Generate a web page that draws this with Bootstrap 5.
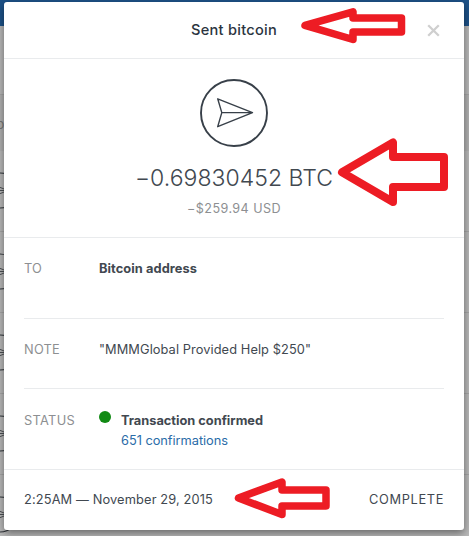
<!DOCTYPE html>
<html lang="en">
<head>
  <meta charset="UTF-8" />
  <meta name="viewport" content="width=device-width, initial-scale=1" />
  <title>Sent bitcoin</title>
  <link href="https://cdn.jsdelivr.net/npm/bootstrap@5.3.3/dist/css/bootstrap.min.css" rel="stylesheet">
  <style>
    body { height: 536px; background: #b9b9b9; font-family: Inter, "Liberation Sans", sans-serif; font-size: 12.8px; line-height: 18px; color: #414850; }
    .page-art, .arrows { top: 0; left: 0; width: 469px; height: 536px; }
    .arrows { pointer-events: none; z-index: 2; }
    .tx-dialog { width: 460px; height: 528px; margin: 2px 0 0 4px; border-radius: 3px; box-shadow: 0 3px 8px rgba(0, 0, 0, .45); }
    .tx-head { height: 57px; border-bottom: 1px solid #e9ebed; }
    .tx-title { font-size: 14.6px; font-weight: 500; color: #2b3440; line-height: 20px; }
    .tx-close { right: 24px; top: 22px; width: 13px; height: 13px; }
    .tx-summary { height: 179px; padding-top: 19px; border-bottom: 1px solid #e9ebed; }
    .tx-amount { font-size: 23px; line-height: 30px; margin-top: 15px; font-weight: 300; }
    .tx-fiat { font-size: 12.6px; line-height: 18px; margin-top: 7px; color: #8d8f92; }
    .tx-row { margin: 0 20px; border-bottom: 1px solid #e9ebed; }
    .tx-row-to { height: 81px; padding-top: 22px; }
    .tx-row-note { height: 70px; padding-top: 22px; }
    .tx-status { padding: 23px 20px 0; }
    .tx-label { width: 75px; color: #8d8f92; }
    .tx-dot { width: 12px; height: 12px; background: #118a14; margin: -1px 10px 0 0; }
    .tx-link { color: #2a6ca8; margin-top: 2px; }
    .tx-foot { height: 61px; padding: 0 20px; border-top: 1px solid #e9ebed; }
  </style>
</head>
<body class="position-relative overflow-hidden">

<!-- dimmed transactions page behind the dialog -->
<svg class="page-art position-absolute" viewBox="0 0 469 536">
  <rect width="469" height="26" fill="#1d5288"/>
  <rect y="94" width="469" height="57" fill="#b1b1b1"/>
  <g stroke="#a6a6a6"><path d="M0 94.5H469M0 231.5H469M0 312.5H469M0 393.5H469M0 474.5H469"/></g>
  <g id="rowIcons" fill="none" stroke="#30353a" stroke-width="1.2"></g>
  <text x="-3.5" y="129" font-size="13" fill="#777">o</text>
</svg>

<div class="tx-dialog position-relative bg-white d-flex flex-column">
  <div class="tx-head d-flex align-items-center justify-content-center position-relative">
    <div class="tx-title"><span id="title">Sent bitcoin</span></div>
    <svg class="tx-close position-absolute" viewBox="0 0 13 13"><path d="M1.2 1.2L11.8 11.8M11.8 1.2L1.2 11.8" stroke="#cfcfcf" stroke-width="2.3"/></svg>
  </div>

  <div class="tx-summary d-flex flex-column align-items-center">
    <svg width="70" height="70" viewBox="0 0 70 70" fill="none" stroke="#384049" stroke-linejoin="round">
      <circle cx="35" cy="35" r="33" stroke-width="1.9"/>
      <path d="M18.7 20.8L53.5 34.6L18.7 48.7L22.8 34.6Z M22.8 34.6H53.5" stroke-width="1.4"/>
    </svg>
    <div class="tx-amount"><span id="amount">−0.69830452 BTC</span></div>
    <div class="tx-fiat"><span id="fiat">−$259.94 USD</span></div>
  </div>

  <div class="tx-row tx-row-to d-flex">
    <div class="tx-label"><span id="lto">TO</span></div>
    <div class="fw-bold"><span id="addr">Bitcoin address</span></div>
  </div>
  <div class="tx-row tx-row-note d-flex">
    <div class="tx-label"><span id="lnote">NOTE</span></div>
    <div><span id="note">"MMMGlobal Provided Help $250"</span></div>
  </div>
  <div class="tx-status d-flex flex-grow-1">
    <div class="tx-label"><span id="lstatus">STATUS</span></div>
    <div class="tx-dot rounded-circle"></div>
    <div>
      <div class="fw-bold"><span id="conf">Transaction confirmed</span></div>
      <div class="tx-link"><span id="confs">651 confirmations</span></div>
    </div>
  </div>
  <div class="tx-foot d-flex align-items-center justify-content-between">
    <span id="date">2:25AM — November 29, 2015</span>
    <span id="complete">COMPLETE</span>
  </div>
</div>

<!-- marker arrows -->
<svg class="arrows position-absolute" viewBox="0 0 469 536" fill="none" stroke="#ed1c24" stroke-linejoin="round">
  <path d="M305 25.3L353 11.8V18H401.5V32H353V39.5Z" stroke-width="7.5"/>
  <path d="M342 172.3L393 142.5V157H444V187H393V202Z" stroke-width="8"/>
  <path d="M238.5 498L282 482V490H326V506H282V514.5Z" stroke-width="7.5"/>
</svg>

<script>
  // outlined paper planes, one per list row
  const rows = [190.5, 271.5, 352.5, 433.5, 514.5];
  document.getElementById("rowIcons").innerHTML = rows.map(y => `
    <circle cx="0" cy="${y}" r="17.5"/>
    <path stroke-width=".8" d="M-10 ${y - 7}L8 ${y}L-10 ${y + 7}M-7 ${y}H8"/>
  `).join('');

  // target text widths in px, reached through letter-spacing
  const widths = { title: 86, amount: 198, fiat: 94, lto: 18, addr: 98, lnote: 36, note: 212, lstatus: 51, conf: 142, confs: 107, date: 189, complete: 75 };
  for (const id in widths) {
    const el = document.getElementById(id);
    const gap = (widths[id] - el.getBoundingClientRect().width) / el.textContent.length;
    el.style.letterSpacing = gap + "px";
  }
</script>
</body>
</html>
